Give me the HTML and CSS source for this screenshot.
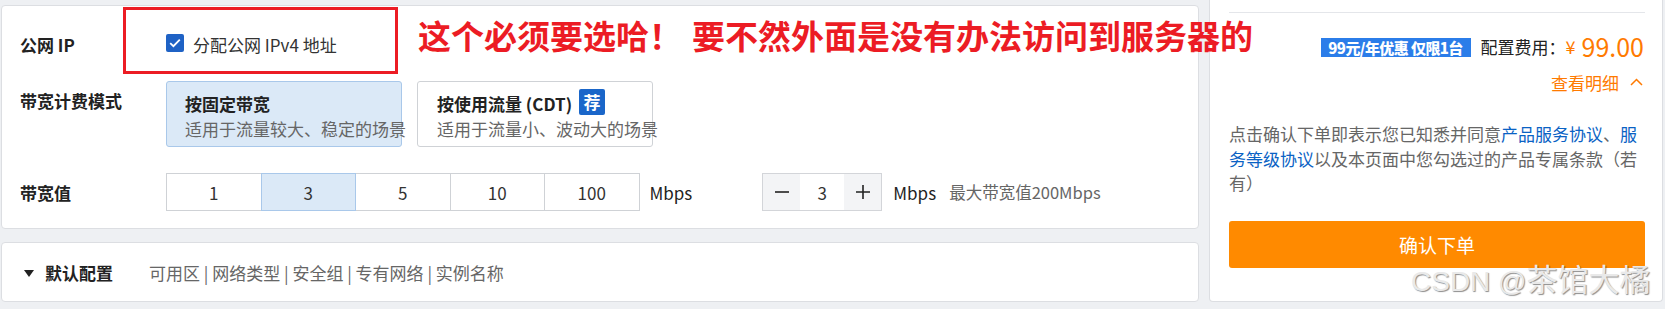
FILE: index.html
```html
<!DOCTYPE html>
<html lang="zh-CN">
<head>
<meta charset="utf-8">
<link rel="stylesheet" href="styles.css">
</head>
<body>
<div class="page">
  <div class="main">
    <section class="card card-config">
      <div class="annot-box"></div>
      <div class="annot-text">这个必须要选哈！<span class="annot-gap">要不然外面是没有办法访问到服务器的</span></div>
      <div class="grid">
        <div class="label row1">公网 IP</div>
        <div class="value row1">
          <span class="checkbox"><svg width="12" height="10" viewBox="0 0 12 10"><path d="M1.2 5.2 L4.4 8.2 L10.8 1.6" fill="none" stroke="#fff" stroke-width="1.8"/></svg></span>
          <span class="cb-text">分配公网 IPv4 地址</span>
        </div>

        <div class="label row2">带宽计费模式</div>
        <div class="value row2 modes">
          <div class="mode selected">
            <div class="mode-title">按固定带宽</div>
            <div class="mode-sub">适用于流量较大、稳定的场景</div>
          </div>
          <div class="mode">
            <div class="mode-title">按使用流量 (CDT) <span class="rec">荐</span></div>
            <div class="mode-sub">适用于流量小、波动大的场景</div>
          </div>
        </div>

        <div class="label row3">带宽值</div>
        <div class="value row3">
          <div class="seg">
            <div class="seg-btn">1</div>
            <div class="seg-btn active">3</div>
            <div class="seg-btn">5</div>
            <div class="seg-btn">10</div>
            <div class="seg-btn">100</div>
          </div>
          <span class="unit">Mbps</span>
          <div class="stepper">
            <div class="step-btn"><svg width="16" height="16" viewBox="0 0 16 16"><path d="M1 8 H15" stroke="#222" stroke-width="1.6"/></svg></div>
            <div class="step-val">3</div>
            <div class="step-btn"><svg width="16" height="16" viewBox="0 0 16 16"><path d="M1 8 H15 M8 1 V15" stroke="#222" stroke-width="1.6"/></svg></div>
          </div>
          <span class="unit unit2">Mbps</span>
          <span class="hint">最大带宽值200Mbps</span>
        </div>
      </div>
    </section>
    <section class="card card-default">
      <span class="tri"></span>
      <span class="def-title">默认配置</span>
      <span class="def-list">可用区 | 网络类型 | 安全组 | 专有网络 | 实例名称</span>
    </section>
  </div>
  <aside class="side">
    <div class="divider"></div>
    <div class="price-row">
      <span class="promo">99元/年优惠 仅限1台</span>
      <span class="price-label">配置费用：</span>
      <span class="yen">¥</span>
      <span class="price">99.00</span>
    </div>
    <div class="detail-row">
      <span>查看明细</span>
      <svg width="13" height="8" viewBox="0 0 13 8"><path d="M1 7 L6.5 1.5 L12 7" fill="none" stroke="#ff7a00" stroke-width="1.5"/></svg>
    </div>
    <p class="terms">点击确认下单即表示您已知悉并同意<a>产品服务协议</a>、<a>服务等级协议</a>以及本页面中您勾选过的产品专属条款（若有）</p>
    <div class="confirm">确认下单</div>
  </aside>
  <div class="watermark">CSDN @<span class="wm-cjk">茶馆大橘</span></div>
</div>
</body>
</html>
```

FILE: styles.css
```css
* { box-sizing: border-box; }
html, body { margin: 0; padding: 0; }
body {
  width: 1665px;
  height: 309px;
  overflow: hidden;
  background: #eef0f3;
  font-family: "Noto Sans CJK SC", "Noto Sans", sans-serif;
  font-size: 17px;
  color: #333;
}
.page {
  position: relative;
  display: flex;
  gap: 10px;
  padding-left: 1px;
  height: 309px;
}
.main {
  width: 1198px;
  display: flex;
  flex-direction: column;
  gap: 13px;
  padding-top: 5px;
}
.card {
  background: #fff;
  border: 1px solid #dcdee2;
  border-radius: 4px;
}
.card-config {
  position: relative;
  height: 224px;
  padding: 19px 0 0 18px;
}
.annot-box {
  position: absolute;
  left: 121px;
  top: 1px;
  width: 275px;
  height: 67px;
  border: 3px solid #ec1c24;
}
.annot-text {
  position: absolute;
  left: 416px;
  top: 9px;
  font-size: 33px;
  line-height: 40px;
  font-weight: 700;
  color: #ec1c24;
  white-space: nowrap;
}
.annot-gap { margin-left: 10px; }
.grid {
  display: grid;
  grid-template-columns: 146px 1fr;
  grid-auto-rows: auto;
}
.label {
  font-weight: 700;
  color: #222;
  line-height: 25px;
  white-space: nowrap;
}
.row1 { height: 38px; display: flex; align-items: center; }
.row2 { margin-top: 18px; height: 66px; }
.row3 { margin-top: 26px; height: 38px; display: flex; align-items: center; }
.label.row2 { padding-top: 7px; }
.value { display: flex; align-items: center; }
.checkbox {
  width: 18px;
  height: 18px;
  border-radius: 2px;
  background: #1f62c5;
  display: flex;
  align-items: center;
  justify-content: center;
  margin-top: -2px;
}
.cb-text { margin-left: 9px; color: #333; }
.modes { gap: 15px; align-items: stretch; }
.mode {
  width: 236px;
  height: 66px;
  border: 1px solid #cfd2d6;
  border-radius: 3px;
  padding: 9px 0 0 19px;
  white-space: nowrap;
  background: #fff;
}
.mode.selected {
  background: #dbe9f7;
  border-color: #a9c8ea;
  padding-left: 18px;
}
.mode-title {
  font-weight: 700;
  color: #222;
  line-height: 25px;
  display: flex;
  align-items: center;
}
.mode-sub {
  color: #666;
  line-height: 25px;
}
.rec {
  display: inline-flex;
  align-items: center;
  justify-content: center;
  width: 26px;
  height: 26px;
  margin-left: 7px;
  margin-top: -4px;
  border-radius: 2px;
  background: #1a66c9;
  color: #fff;
  font-size: 17px;
  font-weight: 700;
}
.seg { display: flex; height: 38px; }
.seg-btn {
  flex: 0 0 95.5px;
  height: 38px;
  border: 1px solid #cfd2d6;
  margin-left: -1px;
  display: flex;
  align-items: center;
  justify-content: center;
  color: #333;
  background: #fff;
}
.seg-btn:first-child { margin-left: 0; }
.seg-btn.active {
  background: #dbe9f7;
  border-color: #a9c8ea;
  position: relative;
  z-index: 1;
}
.unit { margin-left: 10px; color: #222; }
.stepper {
  display: flex;
  height: 38px;
  margin-left: 70px;
  border: 1px solid #d3d5d9;
}
.step-btn {
  width: 37px;
  background: #f3f4f6;
  display: flex;
  align-items: center;
  justify-content: center;
}
.step-val {
  width: 44px;
  display: flex;
  align-items: center;
  justify-content: center;
  background: #fff;
  color: #333;
}
.unit2 { margin-left: 11px; }
.hint { margin-left: 13px; color: #666; font-size: 16.5px; }

.card-default {
  height: 60px;
  display: flex;
  align-items: center;
  padding-left: 22px;
}
.tri {
  width: 0;
  height: 0;
  border-left: 5.5px solid transparent;
  border-right: 5.5px solid transparent;
  border-top: 7px solid #222;
  margin-top: 2px;
}
.def-title { margin-left: 11px; font-weight: 700; color: #222; }
.def-list { margin-left: 36px; color: #666; }

.side {
  width: 454px;
  height: 302px;
  background: #fff;
  border: 1px solid #dcdee2;
  border-top: none;
  border-radius: 0 0 4px 4px;
  padding: 12px 17px 0 19px;
}
.divider { height: 1px; background: #e4e6ea; }
.price-row {
  margin-top: 18px;
  height: 30px;
  display: flex;
  align-items: center;
  justify-content: flex-end;
  padding-right: 1px;
}
.promo {
  width: 150px;
  height: 19px;
  background: #2b7de9;
  color: #fff;
  font-size: 15px;
  font-weight: 900;
  line-height: 19px;
  text-align: center;
  letter-spacing: -0.6px;
  white-space: nowrap;
  overflow: hidden;
  margin-right: 10px;
  margin-top: 2px;
}
.price-label { color: #222; }
.yen { color: #ff7a00; font-size: 18px; margin-left: 0; }
.price { color: #ff7a00; font-size: 25px; margin-left: 6px; }
.detail-row {
  margin-top: 9px;
  height: 24px;
  display: flex;
  align-items: center;
  justify-content: flex-end;
  gap: 11px;
  color: #ff7a00;
  padding-right: 2px;
}
.terms {
  margin: 28px 0 0;
  line-height: 24.5px;
  color: #666;
}
.terms a { color: #0a62c4; }
.confirm {
  margin-top: 25px;
  height: 47px;
  background: #ff8a00;
  border-radius: 3px;
  color: #fff;
  font-size: 19px;
  display: flex;
  align-items: center;
  justify-content: center;
}
.watermark {
  position: absolute;
  left: 1411px;
  top: 260px;
  font-family: "Liberation Sans", "Noto Sans CJK SC", sans-serif;
  font-size: 28px;
  line-height: 36px;
  color: #e9e9e9;
  text-shadow: 1px 1px 1px rgba(0,0,0,0.45);
  white-space: nowrap;
}
.wm-cjk { font-family: "Noto Sans CJK SC", sans-serif; font-size: 31px; }
```
